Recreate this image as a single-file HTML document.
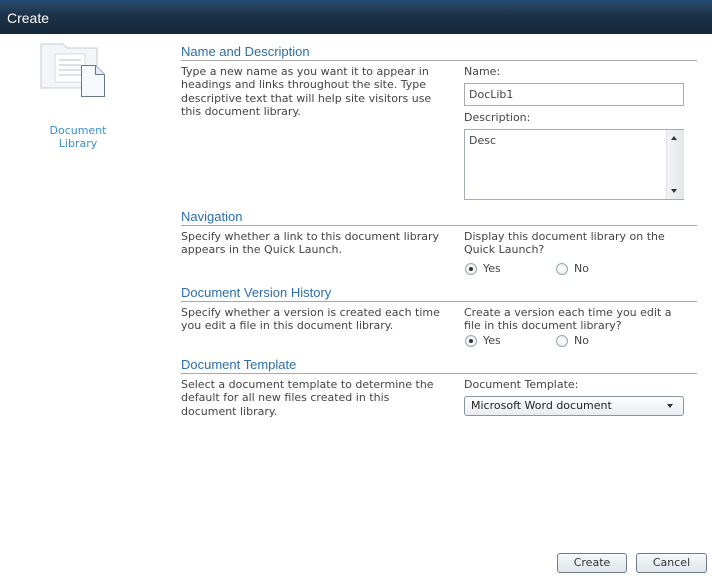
<!DOCTYPE html>
<html><head><style>
body{margin:0;width:712px;height:576px;background:#fff;position:relative;overflow:hidden;font-family:"DejaVu Sans",Verdana,sans-serif;font-size:11px;color:#444;}
.a{position:absolute;}
.bar{left:0;top:0;width:712px;height:34px;background:linear-gradient(#2a4a68,#1c3249 40%,#152638);border-top:2px solid #1f4c7a;box-sizing:border-box;}
.bar span{position:absolute;left:7px;top:8px;color:#fff;font-family:"Liberation Sans",sans-serif;font-size:14px;}
h2{position:absolute;margin:0;left:181px;width:516px;font-family:"Liberation Sans",sans-serif;font-weight:normal;font-size:13px;color:#2e6ea8;border-bottom:1px solid #a8a8a8;height:16px;line-height:15px;}
.t{line-height:13.4px;white-space:nowrap;}
.in{border:1px solid #a5acb5;background:#fff;box-sizing:border-box;}
.rad{width:12px;height:12px;border:1px solid #9aa;border-radius:50%;box-sizing:border-box;background:radial-gradient(#fff,#e4e8ee);}
.rad.on::after{content:"";position:absolute;left:3px;top:3px;width:4px;height:4px;border-radius:50%;background:#333;}
.btn{border:1px solid #707c8c;border-radius:3px;background:linear-gradient(#f6f8fb,#dfe5ec);text-align:center;font-size:11px;color:#333;box-sizing:border-box;line-height:18px;}
</style></head><body>
<div class="a bar"><span>Create</span></div>
<svg class="a" style="left:38px;top:40px" width="70" height="62">
<path d="M3 4h22l4 4h30v40H3z" fill="#f4f5f8" stroke="#c8ccd3"/>
<rect x="17" y="14" width="30" height="28" fill="#fff" stroke="#d5d9e0"/>
<g stroke="#b8c4d4"><line x1="21" y1="20" x2="43" y2="20"/><line x1="21" y1="25" x2="43" y2="25"/><line x1="21" y1="30" x2="43" y2="30"/><line x1="21" y1="35" x2="43" y2="35"/></g>
<path d="M43.5 25.5h14l9 9v22h-23z" fill="#f7f8fb" stroke="#6a7586"/>
<path d="M57.5 25.5v9h9" fill="#e8ecf2" stroke="#6a7586"/>
</svg>
<div class="a" style="left:38px;top:124px;width:80px;text-align:center;color:#3b8fcf;font-size:11px;line-height:13px">Document<br>Library</div>

<h2 style="top:44px">Name and Description</h2>
<div class="a t" style="left:181px;top:65px">Type a new name as you want it to appear in<br>headings and links throughout the site. Type<br>descriptive text that will help site visitors use<br>this document library.</div>
<div class="a" style="left:464px;top:65px">Name:</div>
<div class="a in" style="left:464px;top:83px;width:220px;height:23px;padding:4px 4px;">DocLib1</div>
<div class="a" style="left:464px;top:111px">Description:</div>
<div class="a in" style="left:464px;top:129px;width:220px;height:71px;padding:4px 4px;">Desc</div>
<div class="a" style="left:666px;top:130px;width:17px;height:69px;background:linear-gradient(90deg,#f2f3f5,#e3e6ea);border-left:1px solid #e0e2e6"></div>
<div class="a" style="left:671px;top:136px;width:0;height:0;border:3px solid transparent;border-bottom:4px solid #333;border-top:0"></div>
<div class="a" style="left:671px;top:189px;width:0;height:0;border:3px solid transparent;border-top:4px solid #333;border-bottom:0"></div>

<h2 style="top:209px">Navigation</h2>
<div class="a t" style="left:181px;top:230px">Specify whether a link to this document library<br>appears in the Quick Launch.</div>
<div class="a t" style="left:464px;top:230px">Display this document library on the<br>Quick Launch?</div>
<div class="a rad on" style="left:465px;top:263px"></div><div class="a" style="left:483px;top:262px">Yes</div>
<div class="a rad" style="left:556px;top:263px"></div><div class="a" style="left:574px;top:262px">No</div>

<h2 style="top:285px">Document Version History</h2>
<div class="a t" style="left:181px;top:306px">Specify whether a version is created each time<br>you edit a file in this document library.</div>
<div class="a t" style="left:464px;top:306px">Create a version each time you edit a<br>file in this document library?</div>
<div class="a rad on" style="left:465px;top:335px"></div><div class="a" style="left:483px;top:334px">Yes</div>
<div class="a rad" style="left:556px;top:335px"></div><div class="a" style="left:574px;top:334px">No</div>

<h2 style="top:357px">Document Template</h2>
<div class="a t" style="left:181px;top:378px">Select a document template to determine the<br>default for all new files created in this<br>document library.</div>
<div class="a" style="left:464px;top:378px">Document Template:</div>
<div class="a" style="left:464px;top:396px;width:220px;height:20px;border:1px solid #8a96a6;border-radius:3px;box-sizing:border-box;background:linear-gradient(#fff,#e8ecf1);padding:2px 6px;color:#222;font-size:11px">Microsoft Word document</div>
<div class="a" style="left:667px;top:404px;width:0;height:0;border:3px solid transparent;border-top:4px solid #333;border-bottom:0"></div>

<div class="a btn" style="left:557px;top:553px;width:70px;height:20px">Create</div>
<div class="a btn" style="left:636px;top:553px;width:71px;height:20px">Cancel</div>
</body></html>
